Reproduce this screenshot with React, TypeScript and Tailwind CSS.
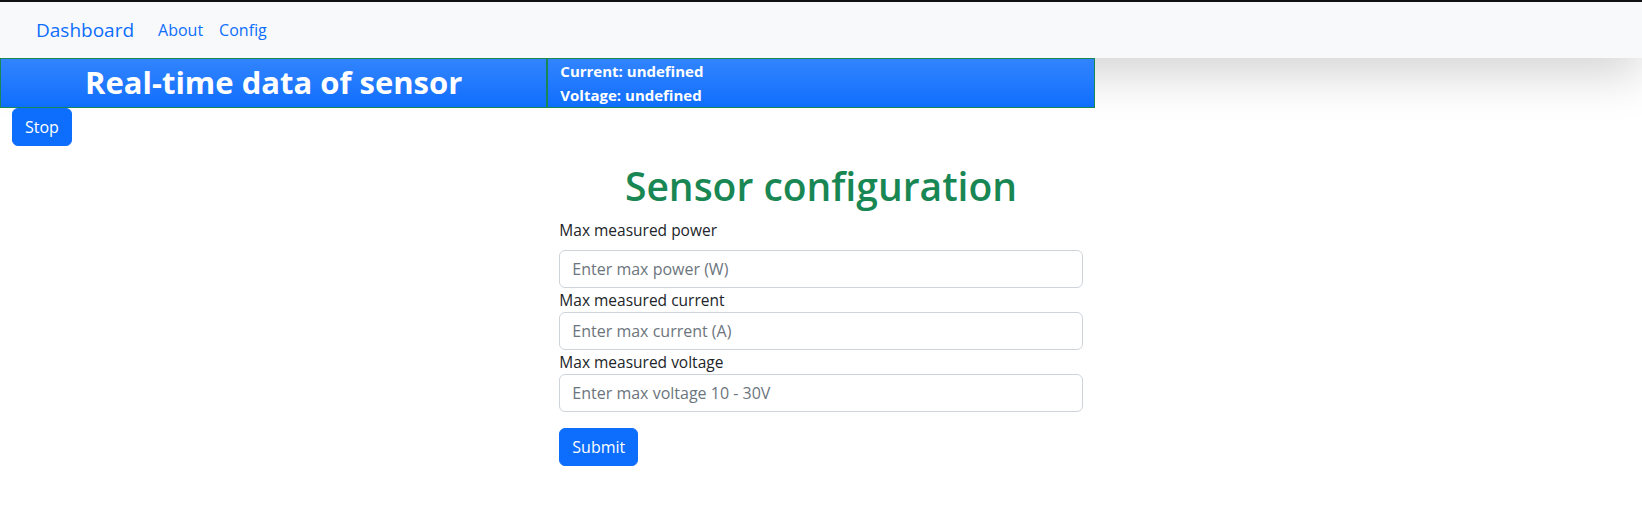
import React, { useState } from "react";

const fields = [
  { label: "Max measured power", placeholder: "Enter max power (W)", first: true },
  { label: "Max measured current", placeholder: "Enter max current (A)", first: false },
  { label: "Max measured voltage", placeholder: "Enter max voltage 10 - 30V", first: false },
];

const App: React.FC = () => {
  const [running, setRunning] = useState(true);
  const [current] = useState<number | undefined>(undefined);
  const [voltage] = useState<number | undefined>(undefined);

  return (
    <div className="min-h-screen bg-white text-[#212529] font-['Open_Sans','Liberation_Sans',sans-serif]">
      {/* navbar */}
      <nav className="flex h-[58px] items-center border-t-2 border-[#111111] bg-[#f8f9fa] px-9 shadow-[0_1rem_3rem_rgba(0,0,0,0.175)]">
        <a href="#" className="mr-4 text-[19px] leading-[30px] text-[#0d6efd]">
          Dashboard
        </a>
        <a href="#" className="px-2 text-base text-[#0d6efd]">
          About
        </a>
        <a href="#" className="px-2 text-base text-[#0d6efd]">
          Config
        </a>
      </nav>

      {/* live values */}
      <div className="flex w-2/3">
        <div className="flex w-1/2 items-center justify-center border border-[#198754] bg-gradient-to-b from-[#3184fd] to-[#0d6efd]">
          <h2 className="text-[31px] font-bold leading-[1.2] text-white">Real-time data of sensor</h2>
        </div>
        <div className="w-1/2 border border-[#198754] bg-gradient-to-b from-[#3184fd] to-[#0d6efd] px-3 text-[15px] font-bold leading-6 text-white">
          <div>Current: {String(current)}</div>
          <div>Voltage: {String(voltage)}</div>
        </div>
      </div>

      <button
        className="ml-3 rounded-md border border-[#0d6efd] bg-[#0d6efd] px-3 py-1.5 text-base leading-6 text-white"
        onClick={() => setRunning(!running)}
      >
        {running ? "Stop" : "Start"}
      </button>

      {/* config form */}
      <div className="mx-auto w-1/3 px-3">
        <h1 className="mb-2 mt-4 text-center text-[39px] font-semibold leading-[48px] text-[#198754]">
          Sensor configuration
        </h1>
        <form onSubmit={(e) => e.preventDefault()}>
          {fields.map((f) => (
            <div key={f.label}>
              <label className={`block text-[15.5px] leading-6 ${f.first ? "mb-2" : ""}`}>{f.label}</label>
              <input
                type="text"
                placeholder={f.placeholder}
                className="block h-[38px] w-full rounded-md border border-[#ced4da] bg-white px-3 text-base leading-6 placeholder:text-[#6c757d]"
              />
            </div>
          ))}
          <button
            type="submit"
            className="mt-4 rounded-md border border-[#0d6efd] bg-[#0d6efd] px-3 py-1.5 text-base leading-6 text-white"
          >
            Submit
          </button>
        </form>
      </div>
    </div>
  );
};

export default App;
